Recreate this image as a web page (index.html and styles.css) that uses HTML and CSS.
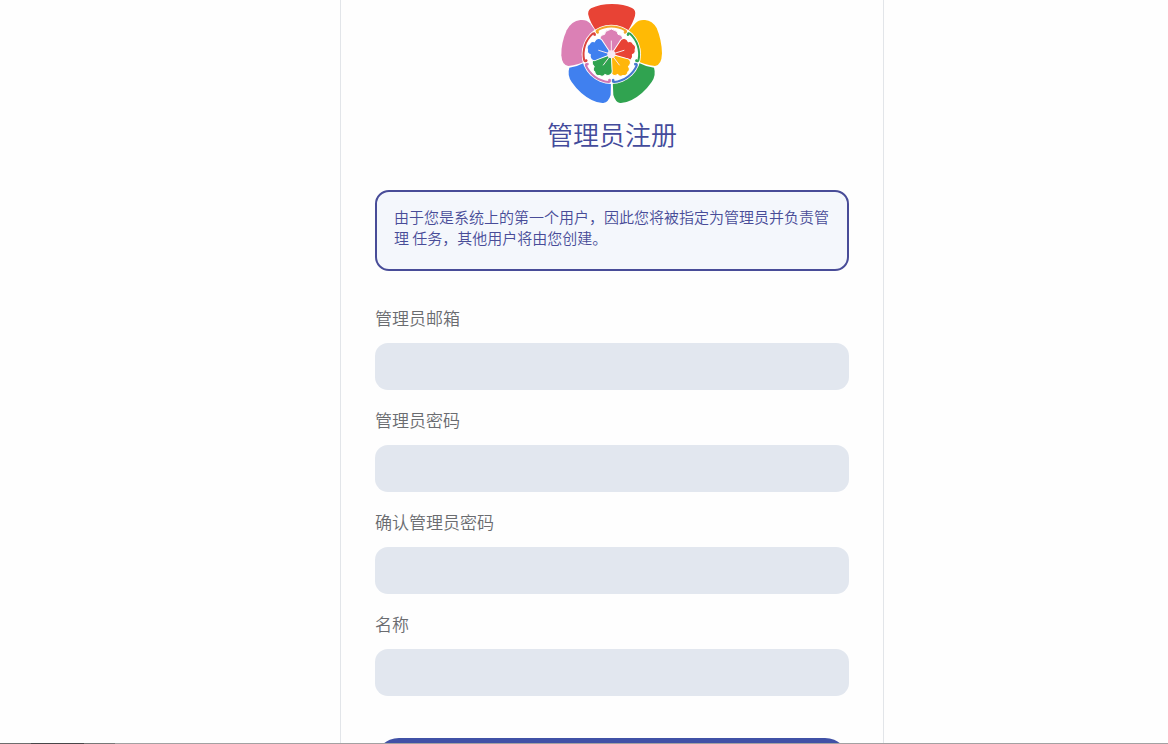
FILE: index.html
```html
<!DOCTYPE html>
<html lang="zh-CN">
<head>
<meta charset="utf-8">
<meta name="viewport" content="width=device-width, initial-scale=1">
<title>管理员注册</title>
<link rel="stylesheet" href="styles.css">
</head>
<body>
<main class="page">
  <section class="panel">
    <svg class="logo" viewBox="0 0 372 330" aria-hidden="true">
      <defs>
        <path id="petal" d="M0 0L-28 -35Q-38 -44 -33 -52Q-30 -59 -20 -60Q-20 -71 -9 -72Q0 -80 9 -72Q20 -71 20 -60Q30 -59 33 -52Q38 -44 28 -35Z"/>
        <g id="clasp" fill="none" stroke="currentColor" stroke-width="6" stroke-linecap="round">
          <path d="M-41 -66Q-47 -68 -42 -72A83 83 0 0 1 42 -72Q47 -68 41 -66"/>
          <circle cx="-41" cy="-66" r="1"/>
          <circle cx="41" cy="-66" r="1"/>
        </g>
      </defs>
      <path fill="#e84335" d="M116 48Q111 33 123 25Q150 12 186 12Q222 12 246 24Q259 31 255 47Q250 66 234 92H138Q120 66 116 48Z"/>
      <path fill="#ffba05" d="M234 94L257 69Q267 58 285 60Q307 62 320 84Q335 120 336 160Q335 196 315 198Q285 195 255 180Z"/>
      <path fill="#30a350" d="M260 186Q285 199 312 203Q319 225 305 246Q280 282 245 300Q225 310 210 309Q196 306 190 285L188 240Z"/>
      <path fill="#4080ef" d="M108 186Q84 199 58 203Q51 225 65 246Q90 282 125 300Q145 310 160 309Q176 306 182 285L183 240Z"/>
      <path fill="#db80b5" d="M137 94L120 70Q110 58 91 60Q64 63 50 91Q33 130 34 166Q36 196 55 198Q85 195 115 180Z"/>
      <circle cx="184" cy="163" r="89" fill="#fff"/>
      <g transform="translate(184 163)">
        <use href="#clasp" color="#f2a62b"/>
        <use href="#clasp" color="#30a350" transform="rotate(72)"/>
        <use href="#clasp" color="#4478cf" transform="rotate(144)"/>
        <use href="#clasp" color="#d075b5" transform="rotate(216)"/>
        <use href="#clasp" color="#dc4540" transform="rotate(288)"/>
        <g stroke="#fff" stroke-width="3">
          <use href="#petal" fill="#db80b5"/>
          <use href="#petal" fill="#e84335" transform="rotate(72)"/>
          <use href="#petal" fill="#ffb60a" transform="rotate(144)"/>
          <use href="#petal" fill="#30a350" transform="rotate(216)"/>
          <use href="#petal" fill="#4080ef" transform="rotate(288)"/>
        </g>
        <path d="M0 0V-40M0 0L38 -12M0 0L24 32M0 0L-24 32M0 0L-38 -12" stroke="#f8e8ee" stroke-width="3" stroke-linecap="round"/>
        <circle r="12" fill="#f8e8f2"/>
      </g>
    </svg>
    <h1 class="title">管理员注册</h1>
    <p class="notice">由于您是系统上的第一个用户，因此您将被指定为管理员并负责管理 任务，其他用户将由您创建。</p>
    <form class="form">
      <div class="field">
        <label class="label" for="email">管理员邮箱</label>
        <input class="input" id="email" type="email">
      </div>
      <div class="field">
        <label class="label" for="password">管理员密码</label>
        <input class="input" id="password" type="password">
      </div>
      <div class="field">
        <label class="label" for="confirm">确认管理员密码</label>
        <input class="input" id="confirm" type="password">
      </div>
      <div class="field">
        <label class="label" for="name">名称</label>
        <input class="input" id="name" type="text">
      </div>
      <button class="submit" type="submit"></button>
    </form>
  </section>
</main>
<div class="edge"></div>
</body>
</html>
```

FILE: styles.css
```css
* {
  box-sizing: border-box;
}

body {
  margin: 0;
  height: 100vh;
  display: flex;
  flex-direction: column;
  overflow: hidden;
  background: #fefefe;
  font-family: "Noto Sans CJK SC", sans-serif;
  font-weight: 350;
}

.page {
  flex: 1;
  min-height: 0;
  overflow: hidden;
  display: flex;
  justify-content: center;
  align-items: flex-start;
  padding-left: 56px;
}

.panel {
  width: 100%;
  max-width: 544px;
  padding: 0 34px 34px;
  border: solid #e2e5e9;
  border-width: 0 1px;
  display: flex;
  flex-direction: column;
}

.logo {
  width: 124px;
  height: 110px;
  align-self: center;
}

.title {
  margin: 5px 0 37px;
  font-size: 26px;
  line-height: 38px;
  font-weight: 350;
  text-align: center;
  color: #434b9b;
}

.notice {
  margin: 0 0 35px;
  padding: 14px 17px 21px;
  border: 2px solid #484c98;
  border-radius: 14px;
  background: #f4f7fc;
  color: #484c98;
  font-size: 15px;
  line-height: 21px;
}

.form {
  display: flex;
  flex-direction: column;
  gap: 18px;
}

.field {
  display: flex;
  flex-direction: column;
  gap: 13px;
}

.label {
  font-size: 17px;
  line-height: 24px;
  color: #6a6c70;
}

.input {
  width: 100%;
  height: 47px;
  padding: 0 16px;
  border: 0;
  border-radius: 13px;
  background: #e2e7ef;
  font: inherit;
}

.submit {
  height: 48px;
  margin-top: 24px;
  border: 0;
  border-radius: 24px;
  background: #4051a6;
}

.edge {
  height: 1px;
  background: linear-gradient(to right, #6d6d6d 31px, #484648 31px 84px, #777 84px 115px, #a3a1a2 115px);
}
```
